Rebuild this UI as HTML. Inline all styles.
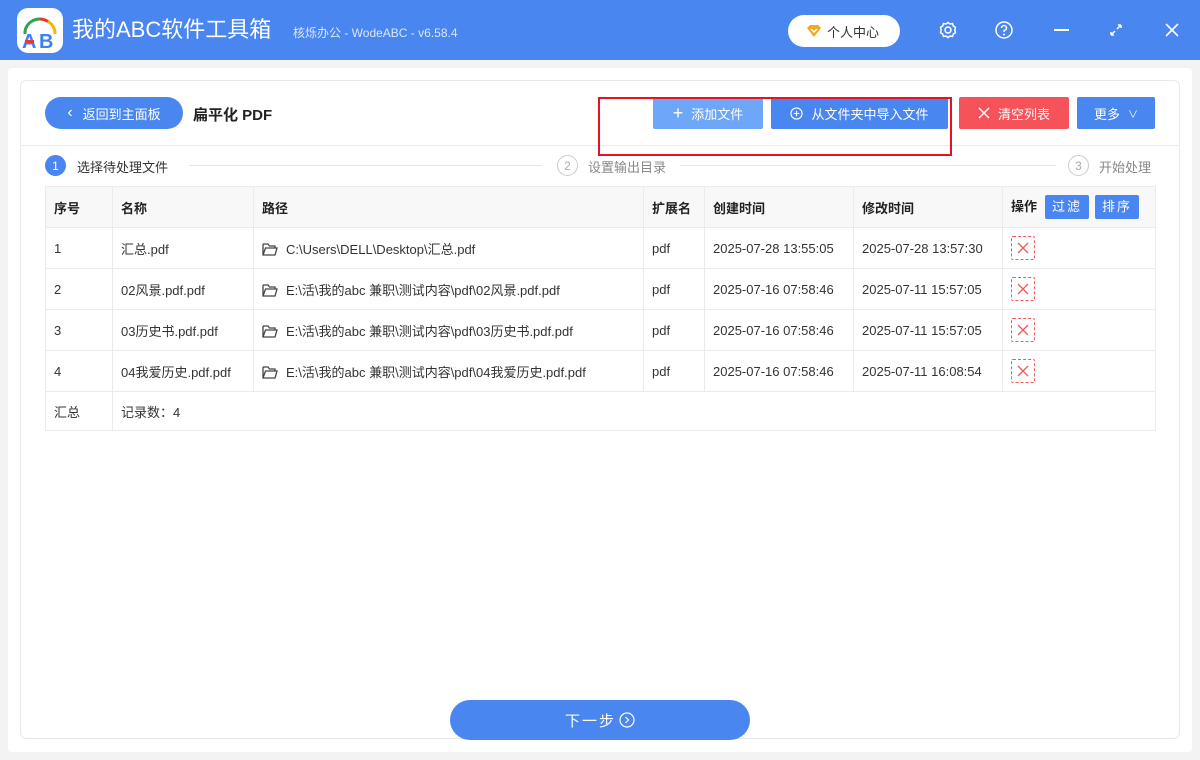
<!DOCTYPE html>
<html><head><meta charset="utf-8">
<style>
*{margin:0;padding:0;box-sizing:border-box}
body{width:1200px;height:760px;overflow:hidden;background:#f3f3f3;font-family:"Liberation Sans","Noto Sans CJK SC",sans-serif;font-size:13px;color:#333;position:relative}
.a{position:absolute}
.title{left:0;top:0;width:1200px;height:60px;background:#4a86f0}
.logo{left:17px;top:8px;width:46px;height:45px;background:#fff;border-radius:11px}
.btn{position:absolute;color:#fff;font-size:13px;display:flex;align-items:center;justify-content:center;border-radius:2px}
table{border-collapse:collapse;position:absolute;left:45px;top:186px;width:1110px;table-layout:fixed}
td,th{border:1px solid #ebebeb;height:41px;padding:0 8px;text-align:left;font-size:13px;white-space:nowrap;overflow:hidden}
td.s{height:39px}
th{background:#f8f8f8;font-weight:bold;color:#222}
td{color:#333}
.del{display:inline-block;width:24px;height:24px;border:1px dashed #f05a5a;border-radius:2px;position:relative;vertical-align:middle}
.fold{display:inline-block;vertical-align:-2px;margin-right:8px}
.sb{display:inline-block;background:#4a86f0;color:#fff;font-weight:normal;padding:0 7px;height:24px;line-height:24px;border-radius:2px;margin-left:6px;letter-spacing:2px}
.circ{width:21px;height:21px;border-radius:50%;display:flex;align-items:center;justify-content:center;font-size:12px}
</style></head><body>
<div class="a title"></div>
<div class="a logo"><svg width="46" height="45" viewBox="0 0 46 45"><path d="M8 26 A15 14 0 0 1 23 11" stroke="#2da44e" stroke-width="3" fill="none"/><path d="M23 11 A15 14 0 0 1 31 13.5" stroke="#e53935" stroke-width="3" fill="none"/><path d="M31 13.5 A15 14 0 0 1 38 26" stroke="#f6b400" stroke-width="3" fill="none"/><text x="5" y="40" font-family="Liberation Sans" font-weight="bold" font-size="20" fill="#3b82f6">A</text><text x="22" y="40" font-family="Liberation Sans" font-weight="bold" font-size="20" fill="#3b82f6">B</text><rect x="8" y="32" width="9" height="3" fill="#e53935"/></svg></div>
<div class="a" style="left:72px;top:15px;color:#fff;font-size:22px;line-height:30px">我的ABC软件工具箱</div>
<div class="a" style="left:293px;top:24px;color:#dbe6fb;font-size:12px">核烁办公 - WodeABC - v6.58.4</div>
<div class="a" style="left:788px;top:15px;width:112px;height:32px;background:#fff;border-radius:16px;display:flex;align-items:center;padding-left:18px;font-size:13px;color:#333"><svg width="16" height="14" viewBox="0 0 16 14" style="margin-right:5px"><path d="M1 4 L4 1 H12 L15 4 L8 13 Z" fill="#f5a623"/><path d="M5 5 L8 8 L11 5" stroke="#fff" stroke-width="1.5" fill="none"/></svg>个人中心</div>
<svg class="a" style="left:938px;top:20px" width="20" height="20" viewBox="0 0 20 20"><circle cx="10" cy="10" r="3" stroke="#fff" stroke-width="1.5" fill="none"/><path d="M10 2.5 L12 4 L14.5 3.6 L15.3 6 L17.5 7.3 L16.8 10 L17.5 12.7 L15.3 14 L14.5 16.4 L12 16 L10 17.5 L8 16 L5.5 16.4 L4.7 14 L2.5 12.7 L3.2 10 L2.5 7.3 L4.7 6 L5.5 3.6 L8 4 Z" stroke="#fff" stroke-width="1.5" fill="none"/></svg>
<svg class="a" style="left:994px;top:20px" width="20" height="20" viewBox="0 0 20 20"><circle cx="10" cy="10" r="8" stroke="#fff" stroke-width="1.5" fill="none"/><path d="M7.5 8 A2.5 2.5 0 1 1 10 10.5 V12" stroke="#fff" stroke-width="1.5" fill="none"/><circle cx="10" cy="14.5" r="1" fill="#fff"/></svg>
<div class="a" style="left:1054px;top:29px;width:15px;height:2px;background:#fff"></div>
<svg class="a" style="left:1108px;top:22px" width="16" height="16" viewBox="0 0 16 16"><path d="M3 13 L7 9 M9 7 L13 3 M3 13 V10 M3 13 H6 M13 3 H10 M13 3 V6" stroke="#fff" stroke-width="1.5" fill="none"/></svg>
<svg class="a" style="left:1164px;top:22px" width="16" height="16" viewBox="0 0 16 16"><path d="M2 2 L14 14 M14 2 L2 14" stroke="#fff" stroke-width="1.6"/></svg>

<div class="a" style="left:8px;top:68px;width:1184px;height:684px;background:#fff;border-radius:4px"></div>
<div class="a" style="left:20px;top:80px;width:1160px;height:659px;background:#fff;border:1px solid #e8e8e8;border-radius:6px"></div>
<div class="a" style="left:21px;top:145px;width:1158px;height:1px;background:#ebebeb"></div>

<div class="btn" style="left:45px;top:97px;width:138px;height:32px;border-radius:16px;background:#4a86f0"><span style="font-size:16px;margin-right:10px">‹</span>返回到主面板</div>
<div class="a" style="left:193px;top:104px;font-size:15px;font-weight:bold;color:#222">扁平化 PDF</div>

<div class="btn" style="left:653px;top:97px;width:110px;height:32px;background:#6ea6f8"><span style="font-size:18px;margin-right:8px;font-weight:300">+</span>添加文件</div>
<div class="btn" style="left:771px;top:97px;width:177px;height:32px;background:#4a86f0"><svg width="13" height="13" viewBox="0 0 14 14" style="margin-right:8px"><circle cx="7" cy="7" r="6" stroke="#fff" fill="none" stroke-width="1.2"/><path d="M7 4 V10 M4 7 H10" stroke="#fff" stroke-width="1.2"/></svg>从文件夹中导入文件</div>
<div class="btn" style="left:959px;top:97px;width:110px;height:32px;background:#f5525a"><svg width="12" height="12" viewBox="0 0 12 12" style="margin-right:8px"><path d="M1 1 L11 11 M11 1 L1 11" stroke="#fff" stroke-width="1.4"/></svg>清空列表</div>
<div class="btn" style="left:1077px;top:97px;width:78px;height:32px;background:#4a86f0">更多<span style="margin-left:8px;font-size:10px">∨</span></div>
<div class="a" style="left:598px;top:97px;width:354px;height:59px;border:2px solid #e81123"></div>

<div class="a circ" style="left:45px;top:155px;background:#4a86f0;color:#fff">1</div>
<div class="a" style="left:77px;top:157px;color:#333">选择待处理文件</div>
<div class="a" style="left:189px;top:165px;width:353px;height:1px;background:#e5e5e5"></div>
<div class="a circ" style="left:557px;top:155px;border:1px solid #ccc;color:#aaa">2</div>
<div class="a" style="left:588px;top:157px;color:#888">设置输出目录</div>
<div class="a" style="left:680px;top:165px;width:376px;height:1px;background:#e5e5e5"></div>
<div class="a circ" style="left:1068px;top:155px;border:1px solid #ccc;color:#aaa">3</div>
<div class="a" style="left:1099px;top:157px;color:#888">开始处理</div>

<table>
<colgroup><col style="width:67px"><col style="width:141px"><col style="width:390px"><col style="width:61px"><col style="width:149px"><col style="width:149px"><col style="width:153px"></colgroup>
<tr><th>序号</th><th>名称</th><th>路径</th><th>扩展名</th><th>创建时间</th><th>修改时间</th><th>操作<span class="sb" style="margin-left:8px">过滤</span><span class="sb">排序</span></th></tr>
<tr><td>1</td><td>汇总.pdf</td><td><svg class="fold" width="16" height="13" viewBox="0 0 16 13"><path d="M1 1 H6 L7.5 3 H13 V5 M1 1 V12 H13 L15 5 H3.5 L1 12" stroke="#444" stroke-width="1.3" fill="none"/></svg>C:\Users\DELL\Desktop\汇总.pdf</td><td>pdf</td><td>2025-07-28 13:55:05</td><td>2025-07-28 13:57:30</td><td><span class="del"><svg width="22" height="22" viewBox="0 0 22 22"><path d="M6 6 L16 16 M16 6 L6 16" stroke="#f05a5a" stroke-width="1.3"/></svg></span></td></tr>
<tr><td>2</td><td>02风景.pdf.pdf</td><td><svg class="fold" width="16" height="13" viewBox="0 0 16 13"><path d="M1 1 H6 L7.5 3 H13 V5 M1 1 V12 H13 L15 5 H3.5 L1 12" stroke="#444" stroke-width="1.3" fill="none"/></svg>E:\活\我的abc 兼职\测试内容\pdf\02风景.pdf.pdf</td><td>pdf</td><td>2025-07-16 07:58:46</td><td>2025-07-11 15:57:05</td><td><span class="del"><svg width="22" height="22" viewBox="0 0 22 22"><path d="M6 6 L16 16 M16 6 L6 16" stroke="#f05a5a" stroke-width="1.3"/></svg></span></td></tr>
<tr><td>3</td><td>03历史书.pdf.pdf</td><td><svg class="fold" width="16" height="13" viewBox="0 0 16 13"><path d="M1 1 H6 L7.5 3 H13 V5 M1 1 V12 H13 L15 5 H3.5 L1 12" stroke="#444" stroke-width="1.3" fill="none"/></svg>E:\活\我的abc 兼职\测试内容\pdf\03历史书.pdf.pdf</td><td>pdf</td><td>2025-07-16 07:58:46</td><td>2025-07-11 15:57:05</td><td><span class="del"><svg width="22" height="22" viewBox="0 0 22 22"><path d="M6 6 L16 16 M16 6 L6 16" stroke="#f05a5a" stroke-width="1.3"/></svg></span></td></tr>
<tr><td>4</td><td>04我爱历史.pdf.pdf</td><td><svg class="fold" width="16" height="13" viewBox="0 0 16 13"><path d="M1 1 H6 L7.5 3 H13 V5 M1 1 V12 H13 L15 5 H3.5 L1 12" stroke="#444" stroke-width="1.3" fill="none"/></svg>E:\活\我的abc 兼职\测试内容\pdf\04我爱历史.pdf.pdf</td><td>pdf</td><td>2025-07-16 07:58:46</td><td>2025-07-11 16:08:54</td><td><span class="del"><svg width="22" height="22" viewBox="0 0 22 22"><path d="M6 6 L16 16 M16 6 L6 16" stroke="#f05a5a" stroke-width="1.3"/></svg></span></td></tr>
<tr><td class="s">汇总</td><td class="s" colspan="6">记录数：4</td></tr>
</table>

<div class="btn" style="left:450px;top:700px;width:300px;height:40px;border-radius:20px;background:#4a86f0;font-size:15px;letter-spacing:2px">下一步<svg width="16" height="16" viewBox="0 0 16 16" style="margin-left:3px"><circle cx="8" cy="8" r="7" stroke="#fff" fill="none" stroke-width="1.2"/><path d="M6.5 5 L9.5 8 L6.5 11" stroke="#fff" fill="none" stroke-width="1.2"/></svg></div>
</body></html>
